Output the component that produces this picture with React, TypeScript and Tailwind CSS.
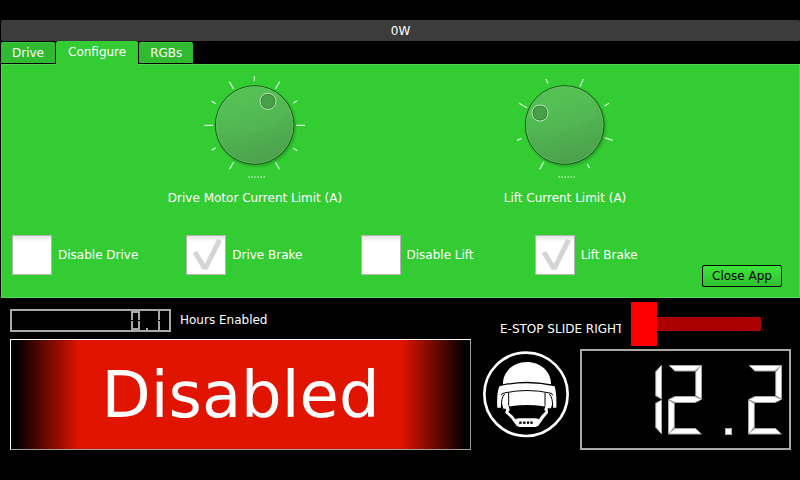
import { useState } from "react";

type Tick = [number, number, number, number];

const driveTicks: Tick[] = [
  [178, 18, 178, 33],
  [103, 35, 116, 57],
  [254, 35, 241, 57],
  [50, 93, 62, 101],
  [307, 92, 295, 99],
  [27, 166, 54, 166],
  [303, 166, 330, 166],
  [50, 241, 62, 233],
  [307, 242, 295, 235],
  [103, 298, 116, 276],
  [254, 298, 241, 276],
];

const liftTicks: Tick[] = [
  [123, 27, 129, 41],
  [235, 27, 225, 50],
  [42, 100, 66, 113],
  [312, 100, 299, 108],
  [36, 211, 50, 205],
  [298, 203, 323, 211],
  [104, 298, 117, 275],
  [247, 282, 254, 295],
];

type DialProps = {
  id: string;
  label: string;
  ticks: Tick[];
  knob: [number, number];
  value: number;
};

function Dial({ id, label, ticks, knob, value }: DialProps) {
  return (
    <div className="flex flex-col items-center">
      <div className="relative h-[120px] w-[120px]">
        <svg viewBox="0 0 360 360" className="block size-full" aria-hidden="true">
          <defs>
            <linearGradient id={`${id}-face`} x1="0.35" y1="0" x2="0.65" y2="1">
              <stop offset="0" stopColor="#54c254" />
              <stop offset="0.5" stopColor="#50b450" />
              <stop offset="1" stopColor="#4c9f4c" />
            </linearGradient>
            <radialGradient id={`${id}-shadow`}>
              <stop offset="0.88" stopColor="#1c801c" stopOpacity="0.6" />
              <stop offset="1" stopColor="#1c801c" stopOpacity="0" />
            </radialGradient>
            <clipPath id={`${id}-clip`}>
              <circle cx="179" cy="165" r="117" />
            </clipPath>
          </defs>
          {ticks.map(([x1, y1, x2, y2], i) => (
            <line key={i} x1={x1} y1={y1} x2={x2} y2={y2} stroke="#d2f5d2" strokeWidth="3.6" />
          ))}
          <circle cx="183" cy="170" r="126" fill={`url(#${id}-shadow)`} />
          <circle cx="179" cy="165" r="118" fill={`url(#${id}-face)`} stroke="#1d561d" strokeWidth="3" />
          <ellipse cx="120" cy="85" rx="175" ry="108" fill="#6ad06a" opacity="0.09" clipPath={`url(#${id}-clip)`} />
          <circle cx="179" cy="165" r="115" fill="none" stroke="#66c866" strokeWidth="2" opacity="0.7" />
          <circle cx={knob[0]} cy={knob[1]} r="22" fill="#46a046" stroke="#2a6e2a" strokeWidth="3" />
          <circle cx={knob[0]} cy={knob[1]} r="24" fill="none" stroke="#b9e6b9" strokeWidth="3" />
          <path d="M160 321H211" stroke="#a6eaa6" strokeWidth="4" strokeDasharray="5 4" />
        </svg>
        <input
          id={id}
          type="range"
          min={0}
          max={100}
          defaultValue={value}
          className="absolute inset-0 size-full cursor-pointer opacity-0"
        />
      </div>
      <label htmlFor={id} className="leading-4">
        {label}
      </label>
    </div>
  );
}

function Check({ id, label, on }: { id: string; label: string; on?: boolean }) {
  return (
    <div className="flex items-center gap-1.5">
      <div className="grid size-10 shrink-0">
        <input
          id={id}
          type="checkbox"
          defaultChecked={on}
          className="peer col-start-1 row-start-1 size-10 appearance-none border border-[#b4b4b4] bg-linear-to-b from-[#e4e4e4] to-white to-15%"
        />
        <svg
          viewBox="0 0 120 120"
          className="pointer-events-none col-start-1 row-start-1 hidden size-10 peer-checked:block"
          aria-hidden="true"
        >
          <path d="M20 55L33 48L57 86L94 11L108 18L64 104H50Z" fill="#d5d5d5" />
        </svg>
      </div>
      <label htmlFor={id} className="whitespace-nowrap">
        {label}
      </label>
    </div>
  );
}

const segmentStyle: Record<string, string> = {
  a: "top-0 left-0 w-full h-1/10 [clip-path:polygon(0_0,100%_0,80%_100%,20%_100%)]",
  b: "top-0 right-0 w-1/5 h-1/2 [clip-path:polygon(0_20%,100%_0,100%_100%,0_90%)]",
  c: "bottom-0 right-0 w-1/5 h-1/2 [clip-path:polygon(0_10%,100%_0,100%_100%,0_80%)]",
  d: "bottom-0 left-0 w-full h-1/10 [clip-path:polygon(20%_0,80%_0,100%_100%,0_100%)]",
  e: "bottom-0 left-0 w-1/5 h-1/2 [clip-path:polygon(0_0,100%_10%,100%_80%,0_100%)]",
  f: "top-0 left-0 w-1/5 h-1/2 [clip-path:polygon(0_0,100%_20%,100%_90%,0_100%)]",
  g: "top-[45%] left-0 w-full h-1/10 [clip-path:polygon(0_50%,20%_0,80%_0,100%_50%,80%_100%,20%_100%)]",
  p: "bottom-0 left-1/2 w-1/5 h-1/10",
};

const lit: Record<string, string> = {
  "0": "abcdef",
  "1": "bc",
  "2": "abged",
  "3": "abgcd",
  "4": "fgbc",
  "5": "afgcd",
  "6": "afgecd",
  "7": "abc",
  "8": "abcdefg",
  "9": "abcdfg",
  ".": "p",
};

function Segments({ value, large }: { value: string; large?: boolean }) {
  return (
    <span role="img" aria-label={value} className={large ? "flex gap-1.5" : "flex gap-px"}>
      {value.split("").map((ch, i) => (
        <span key={i} className={large ? "relative h-[70px] w-[34px]" : "relative h-[19px] w-[9px]"}>
          {lit[ch].split("").map((s) => (
            <span
              key={s}
              className={`absolute bg-[#a9a9a9] ${segmentStyle[s]} ${
                large ? "" : "[clip-path:none]! max-h-[9px] min-h-0.5 min-w-0.5"
              }`}
            >
              {large && <span className="absolute inset-px bg-white [clip-path:inherit]" />}
            </span>
          ))}
        </span>
      ))}
    </span>
  );
}

function Helmet() {
  return (
    <svg viewBox="21 15 264 267" className="mt-px h-[89px] w-[88px] shrink-0 self-start" role="img" aria-label="Helmet">
      <circle cx="153" cy="148" r="125" fill="#000" stroke="#fff" strokeWidth="8" />
      <g transform="translate(45 33)">
        <path d="M39 85C38 45 72 18 111 18C150 18 184 45 183 85Q111 70 39 85Z" fill="#fff" />
        <path
          d="M28 91Q111 72 194 91C198 105 200 125 199 155H189L187 142L183 157H173L174 171L162 185L145 209L137 213H87L80 209L62 185L46 171L48 158H40L36 142L33 155H22C20 130 22 105 28 91Z"
          fill="#fff"
        />
        <path d="M34 118Q34 113 42 111Q111 96 180 111Q188 113 188 118" fill="none" stroke="#000" strokeWidth="3" />
        <path d="M34 154C34 135 36 122 44 114M188 154C188 135 186 122 178 114" fill="none" stroke="#000" strokeWidth="3" />
        <path d="M56 110V148M165 110V148" fill="none" stroke="#000" strokeWidth="3" />
        <path
          d="M55 146Q59 154 66 150Q111 144 156 150Q163 154 167 146L163 162L167 166L154 179L147 190Q142 187 134 187H88Q80 187 76 190L68 179L55 168L59 162Z"
          fill="#000"
        />
        <path d="M89 197H95L94 203H87ZM100 197H106V203H99ZM111 197H117V203H111ZM121 197H127L128 203H122Z" fill="#000" stroke="#000" />
      </g>
    </svg>
  );
}

const tabs = ["Drive", "Configure", "RGBs"];

export default function App() {
  const [active, setActive] = useState("Configure");

  return (
    <main className="min-h-screen bg-black pt-5 font-['DejaVu_Sans',sans-serif] text-xs text-white">
      <div className="ml-px flex h-[21px] items-center justify-center rounded-xs bg-[#3c3c3c]">0W</div>

      <div role="tablist" className="ml-px flex h-[23px] items-end gap-px">
        {tabs.map((tab) => (
          <button
            key={tab}
            type="button"
            role="tab"
            aria-selected={tab === active}
            onClick={() => setActive(tab)}
            className={
              tab === active
                ? "z-10 h-6 -mb-px rounded-t-xs bg-[#33cc33] px-3 pb-0.5"
                : "mb-px h-[21px] rounded-t-xs border-t border-[#3bd03b] bg-[#2fba2f] px-[11px]"
            }
          >
            {tab}
          </button>
        ))}
      </div>

      <section className="ml-px border border-[#4fd84f] bg-[#33cc33] pt-[5px] pb-2.5">
        <div className="grid grid-cols-2 pr-[79px] pl-[98px]">
          <Dial id="drive-limit" label="Drive Motor Current Limit (A)" ticks={driveTicks} knob={[219, 94]} value={58} />
          <Dial id="lift-limit" label="Lift Current Limit (A)" ticks={liftTicks} knob={[105, 129]} value={30} />
        </div>
        <div className="mt-[29px] flex items-end gap-px pr-[17px] pl-2.5">
          <div className="mb-3 grid flex-1 grid-cols-4 gap-2">
            <Check id="disable-drive" label="Disable Drive" />
            <Check id="drive-brake" label="Drive Brake" on />
            <Check id="disable-lift" label="Disable Lift" />
            <Check id="lift-brake" label="Lift Brake" on />
          </div>
          <button
            type="button"
            className="h-[22px] w-20 rounded-xs border border-black bg-linear-to-b from-[#3be63b] to-[#30c030] whitespace-nowrap text-black"
          >
            Close App
          </button>
        </div>
      </section>

      <section className="flex pr-[9px] pl-2.5">
        <div className="flex-1 pt-[11px]">
          <div className="flex items-center gap-[9px]">
            <output
              id="hours"
              className="flex h-[23px] w-[161px] items-center justify-end border-2 border-[#a9a9a9] pr-[9px]"
            >
              <Segments value="0.1" />
            </output>
            <label htmlFor="hours" className="pb-0.5">
              Hours Enabled
            </label>
          </div>
          <div
            role="status"
            className="mt-[7px] flex h-[111px] items-center justify-center border border-t-white border-r-[#a0a0a0] border-b-[#a0a0a0] border-l-white bg-[linear-gradient(to_right,#000_1%,#e11400_15%,#e11400_85%,#000_99%)] text-[64px] leading-none"
          >
            Disabled
          </div>
        </div>

        <div className="w-80 pt-1">
          <div className="flex items-center pl-[29px]">
            <label htmlFor="estop" className="w-[121px] overflow-hidden pt-2.5 whitespace-nowrap">
              E-STOP SLIDE RIGHT
            </label>
            <input
              id="estop"
              type="range"
              defaultValue={0}
              className="ml-2.5 h-11 w-[130px] appearance-none bg-transparent [&::-webkit-slider-runnable-track]:h-3.5 [&::-webkit-slider-runnable-track]:bg-[#aa0000] [&::-webkit-slider-thumb]:-mt-[15px] [&::-webkit-slider-thumb]:h-11 [&::-webkit-slider-thumb]:w-[26px] [&::-webkit-slider-thumb]:appearance-none [&::-webkit-slider-thumb]:bg-[#ff0000]"
            />
          </div>
          <div className="mt-[3px] flex items-center justify-between pl-[11px]">
            <Helmet />
            <output
              aria-label="Battery voltage"
              className="flex h-[101px] w-[211px] items-center justify-end border-2 border-[#a9a9a9] pr-[7px]"
            >
              <Segments value="12.2" large />
            </output>
          </div>
        </div>
      </section>
    </main>
  );
}
